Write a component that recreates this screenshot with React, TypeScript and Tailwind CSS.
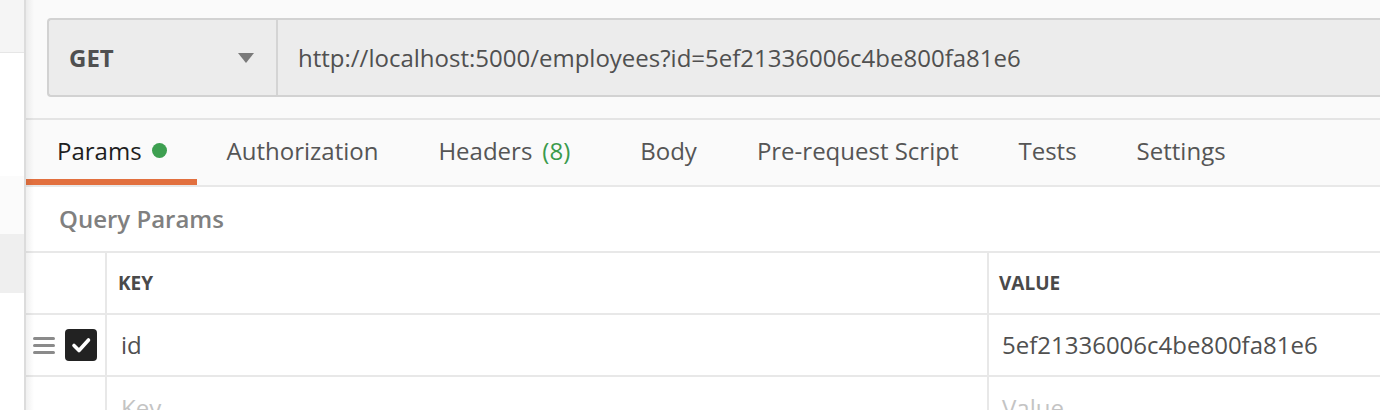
import React from 'react';

const TABS = [
  { label: 'Authorization' },
  { label: 'Headers', count: '(8)' },
  { label: 'Body' },
  { label: 'Pre-request Script' },
  { label: 'Tests' },
  { label: 'Settings' },
];

function DragHandle() {
  return (
    <div className="flex w-[22px] flex-col gap-[4px]">
      <span className="h-[3px] rounded-full bg-[#8a8a8a]" />
      <span className="h-[3px] rounded-full bg-[#8a8a8a]" />
      <span className="h-[3px] rounded-full bg-[#8a8a8a]" />
    </div>
  );
}

function Checkbox() {
  return (
    <div className="flex h-[32px] w-[32px] items-center justify-center rounded-[4px] bg-[#222222]">
      <svg width="22" height="22" viewBox="0 0 22 22" fill="none">
        <path d="M4 11.5 L9 16.5 L18.5 6" stroke="white" strokeWidth="3.6" strokeLinecap="round" strokeLinejoin="round" />
      </svg>
    </div>
  );
}

export default function App() {
  return (
    <div className="flex h-[410px] w-[1380px] overflow-hidden bg-white font-['Open_Sans',sans-serif] text-[#505050]">
      {/* sidebar edge */}
      <div className="flex w-[26px] shrink-0 flex-col border-r-2 border-[#dcdcdc]">
        <div className="h-[53px] shrink-0 border-b border-[#e6e6e6] bg-[#f5f5f5]" />
        <div className="h-[123px] shrink-0 bg-white" />
        <div className="h-[58px] shrink-0 bg-[#fbfbfb]" />
        <div className="h-[59px] shrink-0 bg-[#efefef]" />
        <div className="flex-1 bg-white" />
      </div>

      <div className="relative flex min-w-0 flex-1 flex-col">
        <div className="pointer-events-none absolute inset-y-0 left-0 z-10 w-[8px] bg-gradient-to-r from-black/[0.06] to-transparent" />

        {/* url bar */}
        <div className="shrink-0 border-b-2 border-[#e4e4e4] bg-[#fafafa] pb-[21px] pl-[21px] pt-[18px]">
          <div className="flex h-[79px] rounded-l-[4px] border-2 border-r-0 border-[#d2d2d2] bg-[#ececec]">
            <div className="flex w-[229px] shrink-0 items-center justify-between border-r-2 border-[#d4d4d4] pl-[20px] pr-[22px]">
              <span className="text-[24px] font-bold text-[#505050]">GET</span>
              <svg width="16" height="10" viewBox="0 0 16 10">
                <path d="M0 0 H16 L8 10 Z" fill="#7a7a7a" />
              </svg>
            </div>
            <div className="flex items-center pl-[20px] text-[24px] text-[#505050]">
              http://localhost:5000/employees?id=5ef21336006c4be800fa81e6
            </div>
          </div>
        </div>

        {/* tabs */}
        <div className="flex h-[67px] shrink-0 items-stretch border-b-2 border-[#e8e8e8] bg-[#fafafa]">
          <div className="flex items-center gap-[10px] border-b-[6px] border-[#e2703f] pl-[31px] pr-[30px] pt-[2px] text-[24px] text-[#1e1e1e]">
            <span>Params</span>
            <span className="h-[15px] w-[15px] rounded-full bg-[#3d9f50]" />
          </div>
          {TABS.map((t) => (
            <div
              key={t.label}
              className={
                t.count
                  ? 'flex items-center gap-[10px] pl-[30px] pr-[40px] pb-[4px] text-[24px] text-[#555555]'
                  : 'flex items-center gap-[10px] px-[30px] pb-[4px] text-[24px] text-[#555555]'
              }
            >
              <span>{t.label}</span>
              {t.count && <span className="text-[#3a9a4c]">{t.count}</span>}
            </div>
          ))}
        </div>

        {/* query params */}
        <div className="flex h-[64px] shrink-0 items-center pl-[33px] text-[24px] font-semibold text-[#808080]">Query Params</div>

        {/* table */}
        <div className="grid shrink-0 grid-cols-[81px_882px_1fr] border-t-2 border-[#e8e8e8]">
          <div className="h-[62px] border-b-2 border-r-2 border-[#e8e8e8]" />
          <div className="flex h-[62px] items-center border-b-2 border-r-2 border-[#e8e8e8] pl-[11px] text-[19px] font-bold text-[#4a4a4a]">
            KEY
          </div>
          <div className="flex h-[62px] items-center border-b-2 border-[#e8e8e8] pl-[10px] text-[19px] font-bold text-[#4a4a4a]">
            VALUE
          </div>

          <div className="flex h-[62px] items-center gap-[10px] border-b-2 border-r-2 border-[#e8e8e8] pl-[7px]">
            <DragHandle />
            <Checkbox />
          </div>
          <div className="flex h-[62px] items-center border-b-2 border-r-2 border-[#e8e8e8] pl-[14px] text-[24px] text-[#505050]">
            id
          </div>
          <div className="flex h-[62px] items-center border-b-2 border-[#e8e8e8] pl-[13px] text-[24px] text-[#505050]">
            5ef21336006c4be800fa81e6
          </div>

          <div className="h-[62px] border-r-2 border-[#e8e8e8]" />
          <div className="flex h-[62px] items-center border-r-2 border-[#e8e8e8] pl-[14px] text-[24px] text-[#c4c4c4]">
            Key
          </div>
          <div className="flex h-[62px] items-center pl-[13px] text-[24px] text-[#c4c4c4]">Value</div>
        </div>
      </div>
    </div>
  );
}
